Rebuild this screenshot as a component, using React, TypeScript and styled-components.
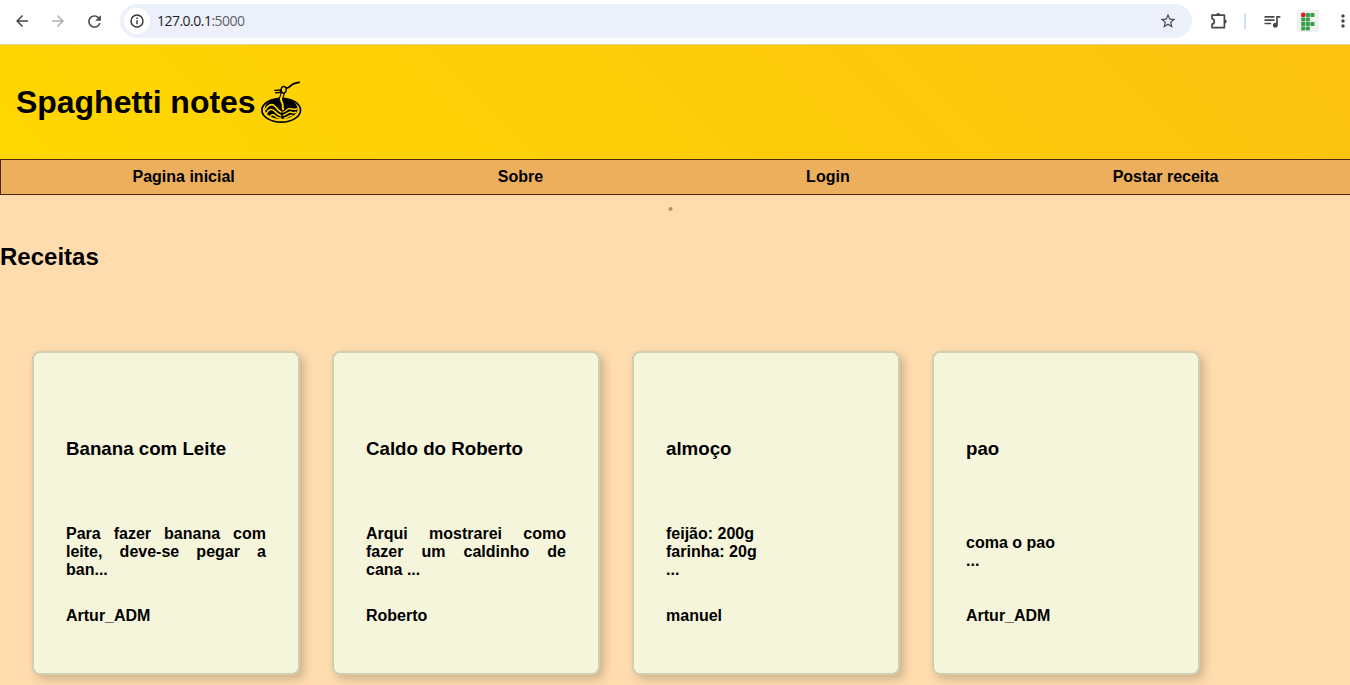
import React from 'react';
import styled, { createGlobalStyle } from 'styled-components';
import { MdArrowBack, MdArrowForward, MdRefresh, MdStarBorder, MdQueueMusic, MdMoreVert } from 'react-icons/md';

const GlobalStyle = createGlobalStyle`
  * { box-sizing: border-box; }
  body {
    margin: 0;
    background: #ffdcae;
    font-family: "Liberation Sans", Arial, sans-serif;
    color: #000;
    overflow: hidden;
  }
`;

const Page = styled.div`
  width: 1350px;
  height: 685px;
  overflow: hidden;
`;

const Toolbar = styled.div`
  display: flex;
  align-items: center;
  height: 44px;
  padding: 0 0 2px 12px;
  background: #fff;
  color: #474747;
`;

const IconSlot = styled.div<{ $width: number; $color?: string; $gap?: number }>`
  display: flex;
  flex: none;
  align-items: center;
  justify-content: center;
  width: ${(p) => p.$width}px;
  margin-left: ${(p) => p.$gap ?? 0}px;
  color: ${(p) => p.$color ?? '#474747'};
`;

const AddressBar = styled.div`
  display: flex;
  flex: none;
  align-items: center;
  width: 1072px;
  height: 34px;
  margin-left: 16px;
  padding: 0 14px 0 4px;
  border-radius: 17px;
  background: #ecf0fa;
`;

const SiteInfo = styled.div`
  display: flex;
  align-items: center;
  justify-content: center;
  width: 26px;
  height: 26px;
  border-radius: 50%;
  background: #fff;
`;

const Url = styled.span`
  flex: 1;
  margin-left: 7px;
  font: 14px/18px "Open Sans", "Noto Sans", sans-serif;
  letter-spacing: -0.52px;
  color: #1f1f1f;
`;

const Port = styled.span`
  color: #5f6368;
`;

const Separator = styled.div`
  flex: none;
  width: 2px;
  height: 16px;
  margin-left: 15px;
  background: #d0dffa;
`;

const Header = styled.header`
  display: flex;
  align-items: center;
  height: 115px;
  padding-left: 16px;
  border-top: 1px solid #dfd295;
  background: linear-gradient(45deg, #ffd700, #fbc210);
`;

const Title = styled.h1`
  margin: 0 5px 0 0;
  font-size: 32px;
  line-height: 37px;
  letter-spacing: -0.03px;
`;

const Nav = styled.nav`
  display: flex;
  justify-content: space-around;
  align-items: center;
  height: 36px;
  border: 1px solid #4d2710;
  border-right: 0;
  background: #ecaf5e;
`;

const NavLink = styled.a`
  font-size: 16px;
  font-weight: bold;
  line-height: 18px;
`;

const Marker = styled.div`
  width: 4px;
  height: 4px;
  margin: 12px auto 0;
  border-radius: 50%;
  background: #b8905f;
  transform: translateX(-4.5px);
`;

const SectionTitle = styled.h2`
  margin: 32px 0 0;
  font-size: 24px;
  line-height: 27px;
`;

const CardList = styled.main`
  display: flex;
  gap: 32px;
  padding: 81px 32px 0;
`;

const Card = styled.article`
  width: 268px;
  height: 324px;
  padding: 85px 32px 0;
  border: 2px solid #d0cfb2;
  border-radius: 8px;
  background: #f5f5dc;
  box-shadow: 4px 4px 10px rgba(0, 0, 0, 0.2);
`;

const CardTitle = styled.h3`
  margin: 0;
  font-size: 18.72px;
  line-height: 22px;
`;

const Excerpt = styled.p`
  display: flex;
  flex-direction: column;
  justify-content: center;
  height: 54px;
  margin: 65px 0 0;
  font-size: 16px;
  font-weight: bold;
  line-height: 18px;
  text-align: justify;
  white-space: pre-line;
`;

const Author = styled.p`
  margin: 28px 0 0;
  font-size: 16px;
  font-weight: bold;
  line-height: 18px;
`;

const InfoIcon = () => (
  <svg width="14" height="14" viewBox="0 0 14 14" fill="none" stroke="#333" strokeWidth="1.4">
    <circle cx="7" cy="7" r="6" />
    <path d="M7 6.2v4M7 3.6v1.5" />
  </svg>
);

const PuzzleIcon = () => (
  <svg width="18" height="18" viewBox="0 0 18 18">
    <path
      d="M2 3.2H14.4V15.6H2V12.2C5 11.8 5 7 2 6.6Z"
      fill="none"
      stroke="#474747"
      strokeWidth="1.7"
      strokeLinejoin="round"
    />
    <path d="M6.3 2.9a1.9 1.9 0 0 1 3.8 0zM14.8 7.5a1.9 1.9 0 0 1 0 3.8z" fill="#474747" />
  </svg>
);

const profileCells = [
  [0, 1, 2],
  [0, 1],
  [0, 1, 2],
  [0, 1],
];

const ProfileIcon = () => (
  <svg width="22" height="22" viewBox="0 0 22 22">
    <rect width="22" height="22" fill="#f1f1f1" />
    {profileCells.map((cols, row) =>
      cols.map((col) =>
        row === 0 && col === 0 ? (
          <circle key="dot" cx="6.2" cy="4.9" r="2.3" fill="#dc1c20" />
        ) : (
          <rect key={`${row}-${col}`} x={4.2 + col * 4.6} y={3 + row * 4.5} width="4.1" height="4" rx=".8" fill="#35a047" />
        ),
      ),
    )}
  </svg>
);

const SpaghettiLogo = () => (
  <svg width="42" height="44" viewBox="0 0 42 44" fill="none" strokeLinecap="round" strokeLinejoin="round">
    <ellipse cx="20.2" cy="30.2" rx="19.3" ry="11.9" stroke="#000" strokeWidth="1.7" />
    <ellipse cx="20.2" cy="28.8" rx="16.4" ry="10.3" fill="#000" />
    <path
      d="M4.6 29.5C6 25.5 10.5 23.4 13 25.4C15.5 27.5 17 30.5 20 32M5.6 33.2C8 28.8 11 28.6 13.5 31C15.5 33 17 34.6 19.5 35.6M9.2 36.2C11 33.6 13.5 35.2 15 36.6C16.4 37.8 18 38.2 20 38.2"
      stroke="#ffd400"
      strokeWidth="1.6"
    />
    <path
      d="M22 32C25 31.6 26 28.4 29 28.6C31.5 28.8 33 30.4 36 28.6M22.5 35.2C25.5 35 27 31.8 29.5 32C31.5 32.2 32.6 33.6 34.6 32.2M23.5 38C26.5 37.8 27.5 35.4 31 35.6"
      stroke="#ffd400"
      strokeWidth="1.5"
    />
    <path d="M21 11.5C23.2 16 17.8 17.8 20.6 21.6C22.8 24.8 21 26.4 22.2 29.4" stroke="#000" strokeWidth="4.2" />
    <path d="M21 11.5C23.2 16 17.8 17.8 20.6 21.6C22.8 24.8 21 26.4 22.2 29.4" stroke="#ffd400" strokeWidth="2" />
    <path d="M38.2 2.4C33.5 2.8 31 4.4 29 6.4C27.6 7.8 26.4 8 25.4 8.2" stroke="#000" strokeWidth="1.8" />
    <path d="M21 10L13.8 10.4M20.5 12.4L14.6 12.8" stroke="#000" strokeWidth="1.4" />
    <path d="M20.4 8.2C21.4 5.6 25 6.2 25.2 9C25.4 11.4 24.2 13.4 22.2 13.2C20.4 13 19.8 10.4 20.4 8.2Z" fill="#ffd400" stroke="#000" strokeWidth="1.5" />
  </svg>
);

const links = ['Pagina inicial', 'Sobre', 'Login', 'Postar receita'];

const recipes = [
  { title: 'Banana com Leite', text: 'Para fazer banana com leite, deve-se pegar a ban...', author: 'Artur_ADM' },
  { title: 'Caldo do Roberto', text: 'Arqui mostrarei como fazer um caldinho de cana ...', author: 'Roberto' },
  { title: 'almoço', text: 'feijão: 200g\nfarinha: 20g\n...', author: 'manuel' },
  { title: 'pao', text: 'coma o pao\n...', author: 'Artur_ADM' },
];

export default function App() {
  return (
    <Page>
      <GlobalStyle />
      <Toolbar>
        <IconSlot $width={20}><MdArrowBack size={18} /></IconSlot>
        <IconSlot $width={20} $gap={16} $color="#b0b0b0"><MdArrowForward size={18} /></IconSlot>
        <IconSlot $width={20} $gap={16}><MdRefresh size={19} /></IconSlot>
        <AddressBar>
          <SiteInfo><InfoIcon /></SiteInfo>
          <Url>127.0.0.1<Port>:5000</Port></Url>
          <IconSlot $width={20}><MdStarBorder size={18} /></IconSlot>
        </AddressBar>
        <IconSlot $width={20} $gap={17}><PuzzleIcon /></IconSlot>
        <Separator />
        <IconSlot $width={20} $gap={16}><MdQueueMusic size={20} /></IconSlot>
        <IconSlot $width={22} $gap={15}><ProfileIcon /></IconSlot>
        <IconSlot $width={20} $gap={14}><MdMoreVert size={20} /></IconSlot>
      </Toolbar>
      <Header>
        <Title>Spaghetti notes</Title>
        <SpaghettiLogo />
      </Header>
      <Nav>
        {links.map((label) => <NavLink key={label}>{label}</NavLink>)}
      </Nav>
      <Marker />
      <SectionTitle>Receitas</SectionTitle>
      <CardList>
        {recipes.map((r) => (
          <Card key={r.title}>
            <CardTitle>{r.title}</CardTitle>
            <Excerpt>{r.text}</Excerpt>
            <Author>{r.author}</Author>
          </Card>
        ))}
      </CardList>
    </Page>
  );
}
